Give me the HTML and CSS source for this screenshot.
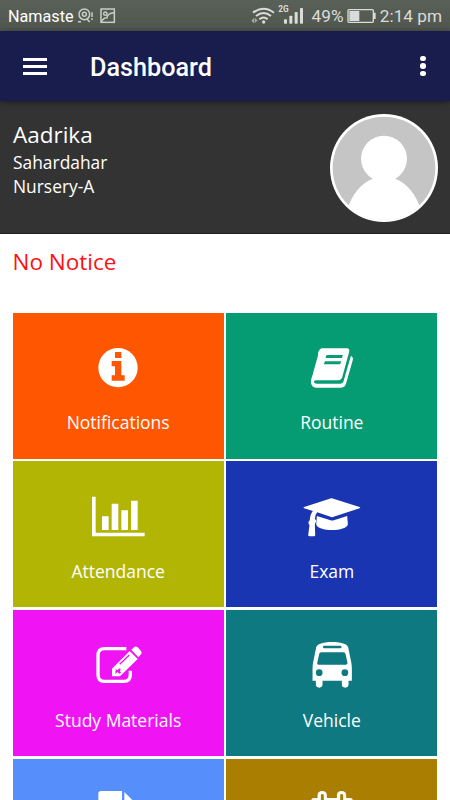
FILE: index.html
```
<!DOCTYPE html>
<html lang="en">
<head>
    <meta charset="UTF-8">
    <title>Dashboard</title>
    <link rel="stylesheet" href="styles.css">
</head>
<body>

<!-- status bar -->
<div class="status-bar">
    <span class="carrier">Namaste</span>
    <svg class="status-left" width="40" height="31" viewBox="228 0 120 93">
        <g fill="none" stroke="#c9cdc9" stroke-width="4.5">
            <circle cx="253" cy="43" r="16"/>
            <circle cx="253" cy="43" r="6"/>
            <path d="M234 65h9M261 57l8 9M276 37v14M276 55v5"/>
            <rect x="303" y="27" width="40" height="40"/>
            <circle cx="316" cy="41" r="5"/>
            <path d="M304 66c4-10 10-13 17-13 1-9 9-14 21-15"/>
        </g>
    </svg>
    <svg class="status-signal" width="54" height="31" viewBox="78 0 162 93">
        <g fill="none" stroke="#d9dcd8" stroke-width="6">
            <path d="M84 38q32-24 63 0M93 48q23-18 45 0M103 58q13-11 25 0"/>
        </g>
        <g fill="#d9dcd8">
            <circle cx="116" cy="66" r="5"/>
            <path d="M79 62l8-8v16zM89 53l9 8-9 9z" opacity=".6"/>
            <rect x="177" y="58" width="9" height="13" rx="2"/>
            <rect x="193" y="47" width="9" height="24" rx="2"/>
            <rect x="209" y="36" width="9" height="35" rx="2"/>
            <rect x="225" y="24" width="9" height="47" rx="2"/>
        </g>
        <text x="160" y="35" class="net">2G</text>
    </svg>
    <span class="percent">49%</span>
    <svg class="battery" width="29" height="31" viewBox="368 0 87 93">
        <rect x="371" y="29" width="76" height="38" rx="3" fill="none" stroke="#d9dcd8" stroke-width="4"/>
        <path fill="#d9dcd8" d="M375 33h30v30h-30zM448 38h6v19h-6z"/>
    </svg>
    <span class="clock">2:14 pm</span>
</div>

<!-- app bar -->
<div class="app-bar">
    <div class="menu"><i></i><i></i><i></i></div>
    <h1>Dashboard</h1>
    <div class="more"><i></i><i></i><i></i></div>
</div>

<!-- student info -->
<div class="profile">
    <div class="info">
        <div class="name">Aadrika</div>
        <div>Sahardahar</div>
        <div>Nursery-A</div>
    </div>
    <svg class="avatar" width="108" height="108" viewBox="0 0 324 324">
        <defs>
            <clipPath id="face"><circle cx="162" cy="162" r="155"/></clipPath>
        </defs>
        <circle cx="162" cy="162" r="162" fill="#fff"/>
        <circle cx="162" cy="162" r="154" fill="#c5c5c5"/>
        <g fill="#fff" clip-path="url(#face)">
            <circle cx="162" cy="134" r="69"/>
            <path d="M50 290C66 242 92 206 130 194h64c38 12 64 48 80 96l-20 34H70z"/>
        </g>
    </svg>
</div>

<div class="notice">No Notice</div>

<!-- menu tiles -->
<div class="tiles">
    <div class="tile notifications">
        <svg viewBox="-6 0 240 210">
            <circle cx="114" cy="113" r="59"/>
            <path class="cut" d="M105 66h19v18h-19zM95 93h29v43h10v16H95v-16h10v-27H95z"/>
        </svg>
        <span>Notifications</span>
    </div>
    <div class="tile routine">
        <svg viewBox="5.4 0 240 210">
            <path d="M94 55h76q9 1 7 10l-21 77q-3 9-12 9H78q-7 0-7 5 1 5 9 5h71q7 0 9-7l22-76q7 2 6 11l-21 74q-4 10-14 10H77q-14-1-15-17 0-8 4-17l17-61q-1-16 11-23z"/>
            <path class="cut" d="M109 75h49l-3 9h-49zM104 94h49l-3 9h-49z"/>
        </svg>
        <span>Routine</span>
    </div>
    <div class="tile attendance">
        <svg viewBox="-6 -4 240 210">
            <path d="M36 49h11v108h147v11H36zM66 108h20v41H66zM95 70h20v79H95zM124 90h20v59h-20zM153 61h20v88h-20z"/>
        </svg>
        <span>Attendance</span>
    </div>
    <div class="tile exam">
        <svg viewBox="5.4 -4 240 210">
            <path d="M125 54l83 26q4 2 0 4l-80 26q-2 1-5 0L81 96q-6 6-7 20 7 5 1 13l-1 5 1 30q0 4-4 4H58q-4 0-4-4l4-30q-7-8 1-14 0-17 9-28L42 84q-4-2 0-4l81-26z"/>
            <path d="M80 107l41 13q5 1 10 0l40-13 2 25c-2 23-93 23-95 0z"/>
        </svg>
        <span>Exam</span>
    </div>
    <div class="tile study">
        <svg viewBox="-6 -8 240 210">
            <path class="line" d="M139 57H74q-20 0-20 20v58q0 20 20 20h57q20 0 20-20v-12"/>
            <path d="M96 117l53-53 24 24-53 52H96zM154 60l9-8q5-3 10 1l10 11q4 5 0 10l-8 9z"/>
            <path class="cut" d="M105 116l7 6 6-6 4 3-2 7 4 3-6 3-6-5-6 6v-8l2-3z"/>
            <path class="groove" d="M119 104l29-28"/>
        </svg>
        <span>Study Materials</span>
    </div>
    <div class="tile vehicle">
        <svg viewBox="5.4 -8 240 210">
            <path d="M77 58c0-15 20-21 49-21s49 6 49 21l8 39q2 10 2 20v36h-10v11q0 10-10 10t-10-10v-11H97v11q0 10-10 10t-10-10v-11H67v-36q0-10 2-20z"/>
            <path class="cut" d="M101 48h50q3 1 3 4t-3 4h-50q-3-1-3-4t3-4zM93 68h67q5 0 6 5l6 27q0 5-5 5H85q-5 0-4-5l6-27q1-5 6-5z"/>
            <circle class="cut" cx="87" cy="129" r="10"/>
            <circle class="cut" cx="164" cy="129" r="10"/>
        </svg>
        <span>Vehicle</span>
    </div>
    <div class="tile homework">
        <svg viewBox="234 108 240 210">
            <path d="M303 153h63v63h63v100H295V161q0-8 8-8zM373 156l52 52h-52z"/>
        </svg>
    </div>
    <div class="tile calendar">
        <svg viewBox="875.4 108 240 210">
            <path d="M933 182q0-8 8-8h11v-7q0-14 14-14t14 14v7h30v-7q0-14 14-14t14 14v7h12q8 0 8 8v130H933z"/>
            <path class="cut" d="M962 166q0-4 4-4t5 4v30h-9zM1020 166q0-4 4-4t5 4v30h-9z"/>
        </svg>
    </div>
</div>

</body>
</html>
```
FILE: styles.css
```
body {
    font-family: "Open Sans", "Noto Sans", sans-serif;
    background-color: #fff;
    margin: 0;
    height: 800px;
    display: flex;
    flex-direction: column;
    overflow: hidden;
}

.status-bar {
    display: flex;
    flex: none;
    height: 31px;
    line-height: 33px;
    padding: 0 8px;
    background: linear-gradient(#596057, #515750);
    font-family: Roboto, sans-serif;
    font-size: 17.2px;
    color: #d9dcd8;
    white-space: nowrap;
}

.status-bar svg {
    flex: none;
}

.carrier {
    width: 69px;
    font-size: 16.2px;
    color: #fff;
}

.status-signal {
    margin-left: 135px;
}

.net {
    font: bold 25px Roboto, sans-serif;
    fill: #d9dcd8;
}

.percent {
    margin-left: 7px;
    width: 36px;
}

.clock {
    margin-left: 4px;
}

.app-bar {
    display: flex;
    flex: none;
    align-items: center;
    height: 70px;
    padding: 0 24px 0 23px;
    background-color: #191d4d;
    color: #fff;
    position: relative;
    box-sizing: border-box;
    box-shadow: 0 1px 6px rgba(0, 0, 0, 0.5);
}

.menu {
    display: flex;
    flex-direction: column;
    gap: 4px;
    width: 24px;
}

.menu i {
    height: 3px;
    background-color: #fff;
}

.app-bar h1 {
    flex: 1;
    margin: 2px 0 0 43px;
    font: 500 25.2px Roboto, sans-serif;
}

.more {
    display: flex;
    flex-direction: column;
    gap: 2px;
}

.more i {
    width: 5.6px;
    height: 5.6px;
    border-radius: 50%;
    background-color: #fff;
}

.profile {
    display: flex;
    flex: none;
    justify-content: space-between;
    height: 132.5px;
    padding: 0 12px 0 13px;
    background-color: #333;
    color: #fff;
    box-sizing: border-box;
    border-bottom: 1px solid #222;
}

.info {
    padding-top: 18px;
    font-size: 17.4px;
    line-height: 24px;
}

.name {
    font-size: 22.5px;
    line-height: 31px;
}

.avatar {
    margin-top: 12.5px;
}

.notice {
    flex: none;
    height: 79.2px;
    padding-left: 12.5px;
    box-sizing: border-box;
    font-size: 22.5px;
    line-height: 56px;
    color: #f11;
}

.tiles {
    flex: 1;
    min-height: 0;
    display: grid;
    grid-template-columns: 211px 211px;
    grid-template-rows: 146px 146px 146px 1fr;
    gap: 2.67px;
    padding-left: 12.67px;
}

.tile {
    display: flex;
    flex-direction: column;
    align-items: center;
    min-height: 0;
    padding-top: 17.3px;
    box-sizing: border-box;
    overflow: hidden;
    background-color: var(--tile);
    font-size: 17.5px;
    line-height: 24px;
    color: #fff;
}

.tile svg {
    flex: none;
    width: 80px;
    height: 70px;
    margin-bottom: 10.5px;
    fill: #fff;
}

.tile .cut {
    fill: var(--tile);
}

.tile .line {
    fill: none;
    stroke: #fff;
    stroke-width: 10;
}

.tile .groove {
    stroke: var(--tile);
    stroke-width: 4;
}

.notifications { --tile: #ff5602; }
.routine { --tile: #069c73; }
.attendance { --tile: #b3b505; }
.exam { --tile: #1a35b2; }
.study { --tile: #f014f5; }
.vehicle { --tile: #0e7981; }
.homework { --tile: #568ffb; }
.calendar { --tile: #aa7e00; }
```
